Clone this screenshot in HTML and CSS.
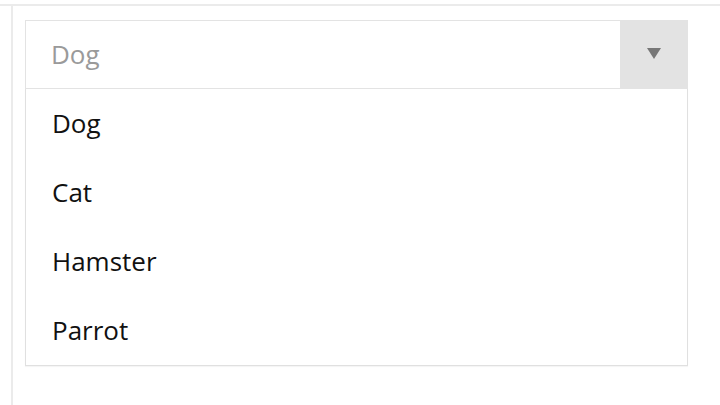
FILE: index.html
```html
<!DOCTYPE html>
<html>
<head>
<meta charset="utf-8">
<link rel="stylesheet" href="styles.css">
</head>
<body>
<div class="page">
  <div class="panel">
    <div class="select">
      <div class="select-head">
        <span class="placeholder">Dog</span>
        <span class="arrow-btn"><span class="arrow"></span></span>
      </div>
      <ul class="options">
        <li>Dog</li>
        <li>Cat</li>
        <li>Hamster</li>
        <li>Parrot</li>
      </ul>
    </div>
  </div>
</div>
</body>
</html>
```
FILE: styles.css
```css
html, body {
  margin: 0;
  padding: 0;
  background: #fff;
}
body {
  font-family: "Open Sans", "Noto Sans", sans-serif;
  width: 720px;
  height: 405px;
  overflow: hidden;
}
.page {
  margin-top: 4px;
  border-top: 2px solid #ebebeb;
  height: 399px;
}
.panel {
  margin-left: 11px;
  border-left: 2px solid #ebebeb;
  height: 100%;
  padding: 14px 0 0 12px;
  box-sizing: border-box;
}
.select {
  width: 663px;
  box-sizing: border-box;
}
.select-head {
  display: flex;
  height: 69px;
  box-sizing: border-box;
  border: 1px solid #e3e3e3;
  border-right: none;
}
.placeholder {
  flex: 1;
  display: flex;
  align-items: center;
  padding-left: 25px;
  font-size: 26px;
  color: #9a9a9a;
  padding-bottom: 1px;
}
.arrow-btn {
  width: 68px;
  background: #e3e3e3;
  display: flex;
  align-items: center;
  justify-content: center;
}
.arrow {
  width: 0;
  height: 0;
  border-left: 7px solid transparent;
  border-right: 7px solid transparent;
  border-top: 11px solid #777;
  margin-top: -3px;
}
.options {
  list-style: none;
  margin: 0;
  padding: 0;
  border: 1px solid #e0e0e0;
  border-top: none;
  box-shadow: 0 1px 1px rgba(0,0,0,0.04);
}
.options li {
  height: 69px;
  display: flex;
  align-items: center;
  padding-left: 26px;
  font-size: 26px;
  color: #111;
  padding-bottom: 1px;
  box-sizing: border-box;
}
```
